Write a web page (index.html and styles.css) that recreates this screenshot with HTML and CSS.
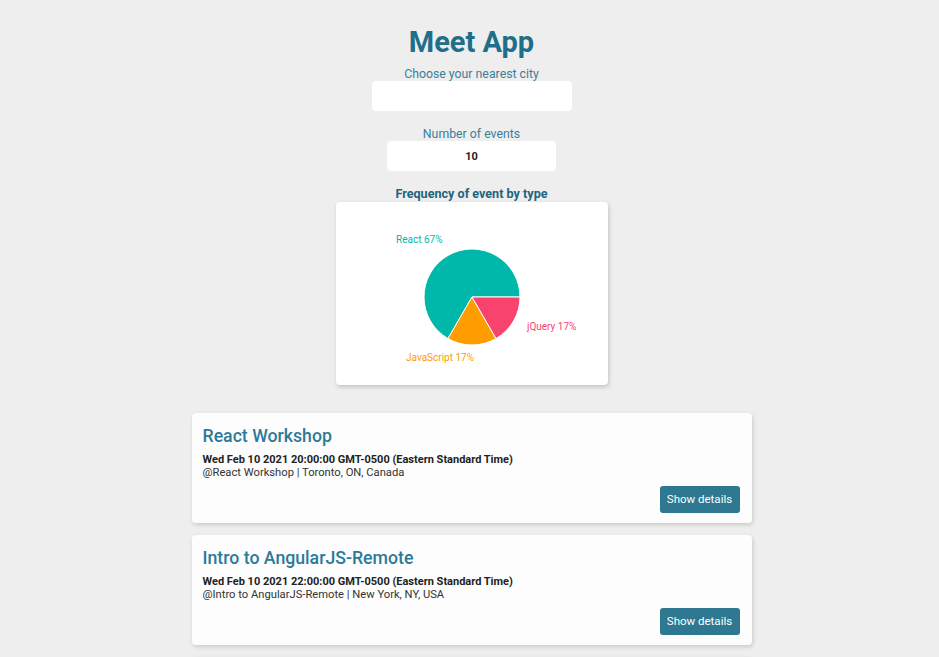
FILE: index.html
```html
<!DOCTYPE html>
<html lang="en">
<head>
<meta charset="utf-8">
<title>Meet App</title>
<link rel="stylesheet" href="styles.css">
</head>
<body>
<div class="app">
  <h1 class="title">Meet App</h1>
  <div class="field">
    <label class="field-label">Choose your nearest city</label>
    <input class="city-input" type="text" value="">
  </div>
  <div class="field">
    <label class="field-label">Number of events</label>
    <input class="num-input" type="text" value="10">
  </div>
  <div class="chart-section">
    <h4 class="chart-title">Frequency of event by type</h4>
    <div class="chart-card">
      <svg class="pie" width="272" height="183" viewBox="0 0 272 183">
        <path d="M136 95 L184 95 A48 48 0 1 0 112 136.57 Z" fill="#00b8a9" stroke="#fff" stroke-width="1"/>
        <path d="M136 95 L112 136.57 A48 48 0 0 0 160 136.57 Z" fill="#ff9c00" stroke="#fff" stroke-width="1"/>
        <path d="M136 95 L160 136.57 A48 48 0 0 0 184 95 Z" fill="#f8436e" stroke="#fff" stroke-width="1"/>
        <text x="60" y="41" class="lbl" fill="#00b8a9">React 67%</text>
        <text x="191" y="128" class="lbl" fill="#f8436e">jQuery 17%</text>
        <text x="70" y="159" class="lbl" fill="#ff9c00">JavaScript 17%</text>
      </svg>
    </div>
  </div>
  <ul class="event-list">
    <li class="event">
      <h2 class="event-name">React Workshop</h2>
      <p class="event-date">Wed Feb 10 2021 20:00:00 GMT-0500 (Eastern Standard Time)</p>
      <p class="event-loc">@React Workshop | Toronto, ON, Canada</p>
      <div class="event-actions"><button class="details-btn">Show details</button></div>
    </li>
    <li class="event">
      <h2 class="event-name">Intro to AngularJS-Remote</h2>
      <p class="event-date">Wed Feb 10 2021 22:00:00 GMT-0500 (Eastern Standard Time)</p>
      <p class="event-loc">@Intro to AngularJS-Remote | New York, NY, USA</p>
      <div class="event-actions"><button class="details-btn">Show details</button></div>
    </li>
    <li class="event event-peek" aria-hidden="true"></li>
  </ul>
</div>
</body>
</html>
```
FILE: styles.css
```css
html, body {
  margin: 0;
  padding: 0;
  background: #eeeeee;
  font-family: Roboto, "Liberation Sans", Arial, sans-serif;
}
body {
  height: 657px;
  overflow: hidden;
}
.app {
  display: flex;
  flex-direction: column;
  align-items: center;
  padding-top: 25px;
  padding-left: 4px;
}
.title {
  margin: 0;
  font-size: 29px;
  line-height: 35px;
  font-weight: 700;
  color: #1f6f8b;
}
.field {
  display: flex;
  flex-direction: column;
  align-items: center;
  margin-top: 6px;
}
.field + .field {
  margin-top: 15px;
}
.field-label {
  font-size: 12.3px;
  line-height: 14px;
  padding-top: 1px;
  color: #3a7f98;
}
.city-input, .num-input {
  box-sizing: border-box;
  border: none;
  outline: none;
  background: #ffffff;
  border-radius: 4px;
  font-family: inherit;
  text-align: center;
}
.city-input {
  width: 200px;
  height: 30px;
}
.num-input {
  width: 169px;
  height: 30px;
  font-size: 11px;
  font-weight: 700;
  color: #222;
}
.chart-section {
  display: flex;
  flex-direction: column;
  align-items: center;
  margin-top: 15px;
}
.chart-title {
  margin: 0;
  font-size: 12.6px;
  line-height: 16px;
  font-weight: 700;
  color: #22657e;
}
.chart-card {
  width: 272px;
  height: 183px;
  background: #ffffff;
  border-radius: 4px;
  box-shadow: 1px 2px 4px rgba(0,0,0,0.18);
}
.pie {
  display: block;
}
.lbl {
  font-family: Roboto, "Liberation Sans", Arial, sans-serif;
  font-size: 10px;
}
.event-list {
  list-style: none;
  margin: 28px 0 0;
  padding: 0;
  width: 560px;
  display: flex;
  flex-direction: column;
  gap: 12px;
}
.event {
  box-sizing: border-box;
  height: 110px;
  flex-shrink: 0;
  background: #fdfdfd;
  border-radius: 4px;
  box-shadow: 1px 2px 4px rgba(0,0,0,0.15);
  padding: 12px 12px 10px 11px;
  display: flex;
  flex-direction: column;
}
.event-name {
  margin: 0 0 6px;
  font-size: 17.7px;
  line-height: 22px;
  font-weight: 500;
  color: #2c7a99;
}
.event-date {
  margin: 0;
  font-size: 11px;
  line-height: 13px;
  font-weight: 700;
  color: #222;
}
.event-loc {
  margin: 0;
  font-size: 11.2px;
  line-height: 13px;
  color: #333;
}
.event-actions {
  margin-top: auto;
  display: flex;
  justify-content: flex-end;
}
.details-btn {
  width: 80px;
  height: 27px;
  border: none;
  border-radius: 3px;
  background: #2e7891;
  color: #ffffff;
  font-family: inherit;
  font-size: 11.5px;
  padding: 0 0 2px;
}
```
